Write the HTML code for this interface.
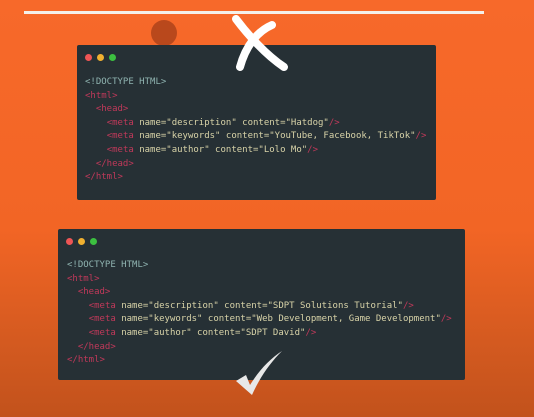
<html><head><style>
body{margin:0;width:534px;height:417px;overflow:hidden;background:linear-gradient(#f7692a 0%,#f26525 55%,#d45a20 82%,#c2521c 100%);position:relative;font-family:"Liberation Mono",monospace}
.line{position:absolute;left:24px;top:11px;width:460px;height:3px;background:#f4f0ea}
.box{position:absolute;background:#263035;border-radius:2px}
.dots{position:absolute;display:flex;gap:5px}
.dots i{width:7px;height:7px;border-radius:50%;display:block}
pre{position:absolute;margin:0;font-size:9px;line-height:13.6px;color:#d8d3a8}
.d{color:#8fb3b0}.t{color:#c0395a}.a{color:#d8d3a8}
</style></head><body>
<div class="line"></div>
<div style="position:absolute;left:151px;top:20px;width:26px;height:26px;border-radius:50%;background:#b9481c"></div>
<div class="box" style="left:77px;top:45px;width:359px;height:155px"></div>
<div class="dots" style="left:85px;top:54px"><i style="background:#ee5555"></i><i style="background:#f0b030"></i><i style="background:#3cc040"></i></div>
<pre style="left:85px;top:76px"><span class="d">&lt;!DOCTYPE HTML&gt;</span>
<span class="t">&lt;html&gt;</span>
  <span class="t">&lt;head&gt;</span>
    <span class="t">&lt;meta</span> name="description" content="Hatdog"<span class="t">/&gt;</span>
    <span class="t">&lt;meta</span> name="keywords" content="YouTube, Facebook, TikTok"<span class="t">/&gt;</span>
    <span class="t">&lt;meta</span> name="author" content="Lolo Mo"<span class="t">/&gt;</span>
  <span class="t">&lt;/head&gt;</span>
<span class="t">&lt;/html&gt;</span></pre>
<svg style="position:absolute;left:228px;top:15px" width="62" height="58" viewBox="0 0 62 58"><path d="M8 4 C20 20 38 40 56 52" stroke="#fff" stroke-width="8" stroke-linecap="round" fill="none"/><path d="M44 10 C30 16 18 30 12 52" stroke="#fff" stroke-width="8" stroke-linecap="round" fill="none"/></svg>
<div class="box" style="left:58px;top:229px;width:407px;height:151px"></div>
<div class="dots" style="left:66px;top:238px"><i style="background:#ee5555"></i><i style="background:#f0b030"></i><i style="background:#3cc040"></i></div>
<pre style="left:67px;top:259px"><span class="d">&lt;!DOCTYPE HTML&gt;</span>
<span class="t">&lt;html&gt;</span>
  <span class="t">&lt;head&gt;</span>
    <span class="t">&lt;meta</span> name="description" content="SDPT Solutions Tutorial"<span class="t">/&gt;</span>
    <span class="t">&lt;meta</span> name="keywords" content="Web Development, Game Development"<span class="t">/&gt;</span>
    <span class="t">&lt;meta</span> name="author" content="SDPT David"<span class="t">/&gt;</span>
  <span class="t">&lt;/head&gt;</span>
<span class="t">&lt;/html&gt;</span></pre>
<svg style="position:absolute;left:232px;top:349px" width="52" height="48" viewBox="0 0 52 48"><path d="M4 32 L14 26 L18 36 C28 20 38 10 50 2 C38 14 28 28 20 46 Z" fill="#e8e8e8"/></svg>
</body></html>
